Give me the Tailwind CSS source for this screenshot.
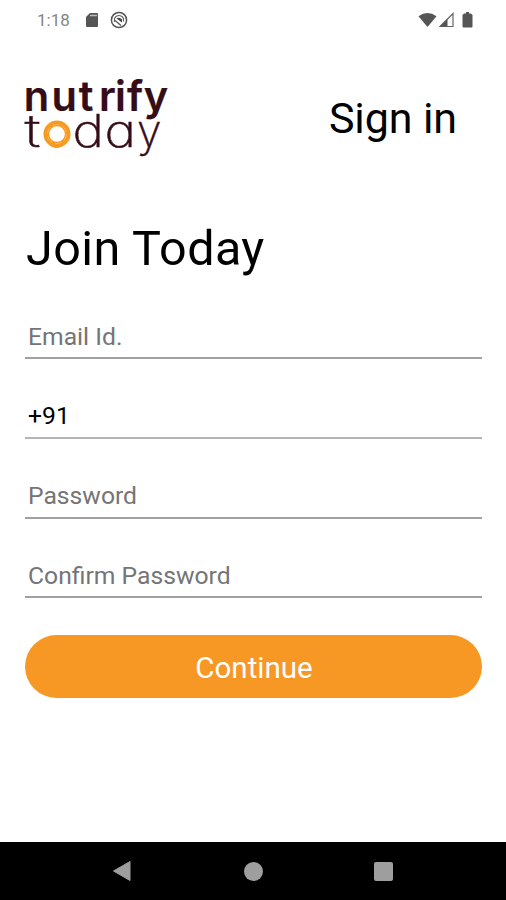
<!DOCTYPE html>
<html lang="en">
<head>
<meta charset="utf-8">
<meta name="viewport" content="width=device-width, initial-scale=1">
<title>Join Today</title>
<script src="https://cdn.jsdelivr.net/npm/@tailwindcss/browser@4"></script>
</head>
<body class="bg-white">
<div class="flex h-[900px] w-[506px] flex-col overflow-hidden bg-white font-['Roboto',sans-serif] text-black">
  <header class="flex h-10 shrink-0 items-center justify-between pl-[37px] pr-[33px]">
    <div class="flex items-center">
      <span class="w-[48px] text-[17px] leading-none text-[#858585]">1:18</span>
      <svg class="h-4 w-[14px]" viewBox="0 0 14 16"><path d="M5 1h7q1 0 1 1v12q0 1-1 1H2q-1 0-1-1V5z" fill="#555"/><path d="M5 3.500h7" stroke="#bbb" stroke-width="1.500"/></svg>
      <svg class="ml-[11px] h-[18px] w-[18px]" viewBox="0 0 18 18" fill="none"><circle cx="9" cy="9" r="7.600" stroke="#555" stroke-width="1.500"/><path d="M4.500 11V7.500Q6 4.500 9 4.500t4.500 3v3" stroke="#666" stroke-width="1.200"/><path d="M6.500 7.500q3-2 5.500 1v3z" fill="#444"/><path d="M5 9.500l6 5" stroke="#555" stroke-width="1.300"/></svg>
    </div>
    <div class="flex items-center">
      <svg class="h-4 w-[19px]" viewBox="0 0 19 16"><path d="M.5 4.200Q9.500-2 18.500 4.200L9.500 15z" fill="#555"/></svg>
      <svg class="ml-[2px] h-4 w-4" viewBox="0 0 16 16"><path d="M1 14.500L14 1.500v13z" fill="none" stroke="#666" stroke-width="1.200"/><path d="M1 14.500l7.500-7.500v7.500z" fill="#555"/></svg>
      <svg class="ml-[7px] h-4 w-[11px]" viewBox="0 0 11 16"><path d="M4 0h3v1.500h2l1.500 1.500v11.500q0 1-1 1h-8q-1 0-1-1V3L2 1.500h2z" fill="#555"/></svg>
    </div>
  </header>
  <main class="flex flex-1 flex-col px-[25px]">
    <div class="mt-[34px] flex h-[88px] w-full items-start justify-between pr-[24px]">
      <svg class="h-[88px] w-[150px] overflow-visible" viewBox="25 74 150 88" font-family="Inter, sans-serif" fill="#350d17">
        <text y="110.500" font-size="41.500" font-weight="600" stroke="#350d17" stroke-width=".2"><tspan x="23.700">n</tspan><tspan x="51.500">u</tspan><tspan x="78.800">t</tspan><tspan x="99">r</tspan><tspan x="115">i</tspan><tspan x="127">f</tspan><tspan x="143.800">y</tspan></text>
        <g font-size="44.500" font-weight="200" stroke="#350d17" stroke-width=".5" style="font-feature-settings:'cv11'">
          <text x="24.500" y="146.500" textLength="16" lengthAdjust="spacingAndGlyphs">t</text>
          <text x="43.500" y="146.500" fill="#f79a22" stroke="none">o</text>
          <text x="72.500" y="146.500" textLength="31.500" lengthAdjust="spacingAndGlyphs">d</text>
          <text x="104.500" y="146.500" textLength="31.500" lengthAdjust="spacingAndGlyphs">a</text>
          <text x="137" y="146.500">y</text>
        </g>
        <circle cx="57" cy="134" r="10.700" fill="#fff" stroke="#f79a22" stroke-width="5.700"/>
        <circle cx="57" cy="134" r="9.500" fill="none" stroke="#ffc56e" stroke-width=".7" stroke-dasharray="7 3"/>
      </svg>
      <a class="mt-[19px] whitespace-nowrap text-[43px] leading-[50px] tracking-[-0.1px]">Sign in</a>
    </div>
    <h1 class="ml-px mt-[62px] whitespace-nowrap text-[48.500px] leading-[50px] tracking-[0.4px]">Join Today</h1>
    <form class="mt-[37px] flex w-[457px] flex-col text-[24.700px] text-[#757575]">
      <div class="h-[48px] border-b-2 border-[#a0a0a0] pl-[3px] leading-[52px]">Email Id.</div>
      <div class="mt-8 h-[48px] border-b-2 border-[#b5b5b5] pl-[3px] leading-[49px] text-black">+91</div>
      <div class="mt-8 h-[48px] border-b-2 border-[#a0a0a0] pl-[3px] leading-[49px]">Password</div>
      <div class="mt-8 h-[47px] border-b-2 border-[#a0a0a0] pl-[3px] leading-[49px]">Confirm Password</div>
      <button type="button" class="mt-[37px] h-[63px] w-[457px] rounded-full bg-[#f79824] pl-[1px] pt-[4px] text-[29.500px] text-white">Continue</button>
    </form>
  </main>
  <nav class="flex h-[58px] shrink-0 items-center bg-black pl-[112px]">
    <svg class="h-[22px] w-[19px]" viewBox="0 0 19 22"><path d="M18 1.500v19L1.500 11z" fill="#9e9e9e" stroke="#9e9e9e" stroke-linejoin="round"/></svg>
    <span class="ml-[113px] h-[19px] w-[19px] rounded-full bg-[#9e9e9e]"></span>
    <span class="ml-[111px] h-[19px] w-[19px] rounded-[2px] bg-[#9e9e9e]"></span>
  </nav>
</div>
</body>
</html>
